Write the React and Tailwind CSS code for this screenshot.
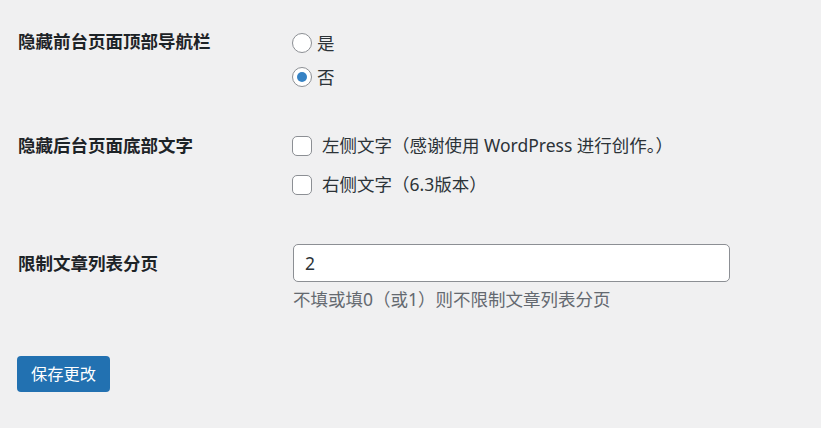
import React from "react";

const font = { fontFamily: '"Noto Sans", "Noto Sans CJK SC", sans-serif' };

function Radio({ checked, label }) {
  return (
    <label className="flex h-[34px] items-center">
      <span className="flex h-[20px] w-[20px] items-center justify-center rounded-full border border-[#8c8f94] bg-white">
        {checked && <span className="h-[10px] w-[10px] rounded-full bg-[#3582c4]" />}
      </span>
      <span className="ml-[5px] leading-[25px] text-[#2c3338]">{label}</span>
    </label>
  );
}

function Checkbox({ label }) {
  return (
    <label className="flex h-[39px] items-center">
      <span className="h-[20px] w-[20px] rounded-[5px] border border-[#8c8f94] bg-white" />
      <span className="ml-[10px] leading-[25px] text-[#2c3338]">{label}</span>
    </label>
  );
}

export default function App() {
  return (
    <div
      className="h-[428px] w-[821px] overflow-hidden bg-[#f0f0f1] pl-[18px] pt-[26px] text-[17.5px]"
      style={font}
    >
      {/* 顶部导航栏 */}
      <div className="flex">
        <div className="mt-[3px] w-[274px] font-semibold leading-[25px] text-[#1d2327]">
          隐藏前台页面顶部导航栏
        </div>
        <div className="flex flex-col">
          <Radio label="是" />
          <Radio checked label="否" />
        </div>
      </div>

      {/* 底部文字 */}
      <div className="mt-[32px] flex">
        <div className="mt-[7px] w-[274px] font-semibold leading-[25px] text-[#1d2327]">
          隐藏后台页面底部文字
        </div>
        <div className="flex flex-col">
          <Checkbox label="左侧文字（感谢使用 WordPress 进行创作。）" />
          <Checkbox label="右侧文字（6.3版本）" />
        </div>
      </div>

      {/* 分页 */}
      <div className="mt-[40px] flex">
        <div className="mt-[7px] w-[275px] font-semibold leading-[25px] text-[#1d2327]">
          限制文章列表分页
        </div>
        <div className="flex flex-col">
          <input
            defaultValue="2"
            className="h-[38px] w-[437px] rounded-[5px] border border-[#8c8f94] bg-white px-[11px] text-[17.5px] text-[#2c3338] outline-none"
            style={font}
          />
          <p className="mt-[5px] leading-[25px] text-[#646970]">
            不填或填0（或1）则不限制文章列表分页
          </p>
        </div>
      </div>

      <button className="mt-[44px] -ml-px flex h-[36px] items-center rounded-[4px] bg-[#2271b1] px-[14px] text-[16.25px] text-white">
        保存更改
      </button>
    </div>
  );
}
